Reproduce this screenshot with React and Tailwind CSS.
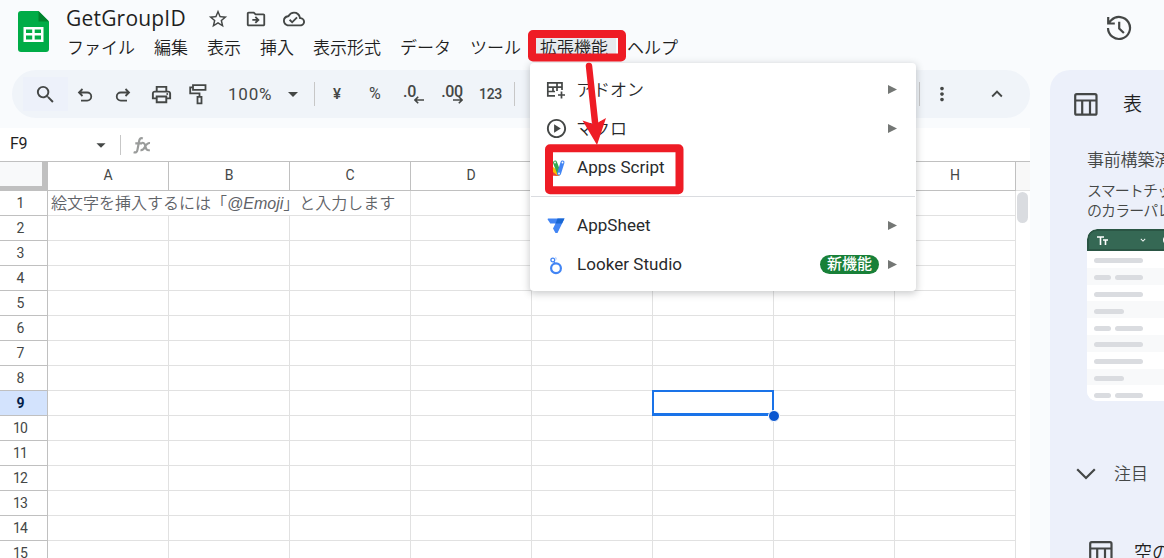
import React from 'react';
import {
  MdStarBorder,
  MdOutlineDriveFileMove,
  MdOutlineCloudDone,
  MdSearch,
  MdOutlinePrint,
  MdMoreVert,
  MdKeyboardArrowUp,
  MdKeyboardArrowDown,
  MdArrowDropDown,
  MdOutlinePlayCircle,
} from 'react-icons/md';

const MENUS = ['ファイル', '編集', '表示', '挿入', '表示形式', 'データ', 'ツール', '拡張機能', 'ヘルプ'];
const COLUMNS = ['A', 'B', 'C', 'D', 'E', 'F', 'G', 'H'];
const ROWS = Array.from({ length: 15 }, (_, i) => i + 1);
const PREVIEW_ROWS = ['full', 'split', 'full', 'short', 'split', 'full', 'full', 'short', 'split'];

const SheetsLogo = () => (
  <svg width="31" height="41" viewBox="0 0 31 41" className="shrink-0">
    <path d="M3 0H20.5L31 10.500V38a3 3 0 0 1-3 3H3a3 3 0 0 1-3-3V3a3 3 0 0 1 3-3z" fill="#00ac47" />
    <path d="M20.500 0L31 10.500H20.500z" fill="#00832d" />
    <path fillRule="evenodd" d="M5.500 16h20v15h-20zM8 18.500v3.500h6.200v-3.500zM16.700 18.500v3.500H23v-3.500zM8 24.500v4h6.200v-4zM16.700 24.500v4H23v-4z" fill="#fff" />
  </svg>
);

const UndoIcon = ({ className = '' }) => (
  <svg width="16" height="16" viewBox="0 0 16 16" fill="none" stroke="#444746" strokeWidth="1.800" className={className}>
    <path d="M5.500 2L2 5.500 5.500 9M2 5.500h8.200a4 4 0 0 1 0 8.100H4" />
  </svg>
);

const PaintIcon = () => (
  <svg width="18" height="21" viewBox="0 0 18 21" fill="none" stroke="#444746" strokeWidth="1.800">
    <path d="M4 1.200h12.500v4.600H4zM4 3.300H1.200v6h9.300v3.500" />
    <path d="M8.500 12.800h4v6.500h-4z" />
  </svg>
);

const HistoryIcon = () => (
  <svg width="26" height="26" viewBox="0 0 26 26" fill="none" stroke="#444746" strokeWidth="2.200">
    <path d="M2 13a11 11 0 1 0 3.200-7.800L2.500 8M2.200 2v6.500h6.600M13.200 6.800v6.700l4.700 4.500" />
  </svg>
);

const DecimalIcon = ({ label, increase }) => (
  <div className="relative w-[22px] h-6 text-[16px] leading-[18px] font-medium">
    <span className={`block -tracking-[0.300px] ${increase ? 'text-center' : 'pl-px'}`}>{label}</span>
    <svg width="10" height="8" viewBox="0 0 10 8" fill="none" stroke="#444746" strokeWidth="1.600" className={`absolute right-0 bottom-[3px] ${increase ? 'rotate-180' : ''}`}>
      <path d="M4.200 .8L1 4l3.200 3.200M1 4h9" />
    </svg>
  </div>
);

const TableIcon = () => (
  <svg width="24" height="23" viewBox="0 0 24 23" fill="none" stroke="#444746" strokeWidth="2.200" className="shrink-0">
    <rect x="1.200" y="1.200" width="21.300" height="20.500" rx="1.500" />
    <path d="M1 7.500h22M8.200 7.500v14M16 7.500v14" />
  </svg>
);

const AddonIcon = () => (
  <svg width="20" height="18" viewBox="0 0 20 18" fill="none" stroke="#444746" strokeWidth="1.700">
    <path d="M16 9V1.800H1.800v13H9M1.800 6.100H16M1.800 10.500H9M7 6v4.500M11 2v8M15.500 10.500v7M12 14h7" />
  </svg>
);

const AppsScriptIcon = () => (
  <svg width="20" height="18" viewBox="0 0 20 18" fill="none" strokeLinecap="round">
    <path d="M3 14.500L12 15" stroke="#ea4335" strokeWidth="4" />
    <path d="M4 8L12 14.500" stroke="#fbbc04" strokeWidth="4" />
    <path d="M9 3.500L13 14" stroke="#34a853" strokeWidth="4" />
    <path d="M16.500 3.500L13 14.500" stroke="#4285f4" strokeWidth="4" />
    <circle cx="9" cy="3.500" r=".9" fill="#fff" />
    <circle cx="16.500" cy="3.500" r=".9" fill="#fff" />
    <circle cx="13" cy="14.500" r=".9" fill="#fff" />
  </svg>
);

const AppSheetIcon = () => (
  <svg width="18" height="16" viewBox="0 0 18 16">
    <path d="M1 .5h16.500L10.500 15H8.500L6 10.500 8.500 5.500H3.300L.5 1.200z" fill="#4285f4" />
    <path d="M10.500 .5h7L15 5.500H8.500z" fill="#1967d2" />
  </svg>
);

const LookerIcon = () => (
  <svg width="14" height="20" viewBox="0 0 14 20" fill="none" stroke="#4285f4">
    <circle cx="7" cy="13.300" r="4.900" strokeWidth="2.200" />
    <circle cx="3.800" cy="5" r="1.900" strokeWidth="1.300" />
    <path d="M4.800 6.500L6 8.500" strokeWidth="1.300" />
    <path d="M6 2.500a2.500 2.500 0 0 1 1.500 2" stroke="#c6dafc" strokeWidth="1.500" />
  </svg>
);

const MenuItem = ({ icon, label, latin, badge, arrow }) => (
  <div className="flex items-center h-[39px] pl-4 pr-[19px]">
    <div className="w-5 mr-[11px] flex justify-center">{icon}</div>
    <span className={`flex-1 text-[17px] whitespace-nowrap text-[#282a2c] ${latin ? 'font-normal tracking-[0.050px]' : 'pt-0.5 -ml-px font-[350]'}`}>{label}</span>
    {badge && (
      <span className="mr-[9px] w-[59px] h-[19px] rounded-full bg-[#188038] text-white text-[15px] leading-[18px] font-medium text-center">{badge}</span>
    )}
    {arrow && (
      <svg width="9" height="9" viewBox="0 0 9 9"><path d="M0 0l9 4.500L0 9z" fill="#747775" /></svg>
    )}
  </div>
);

const ExtensionsMenu = () => (
  <div className="absolute left-[530px] top-[63px] w-[386px] h-[228px] pt-[7px] bg-white rounded shadow-[0_2px_7px_1px_rgba(60,64,67,0.25)]">
    <MenuItem icon={<AddonIcon />} label="アドオン" arrow />
    <MenuItem icon={<MdOutlinePlayCircle size={23} color="#444746" className="shrink-0" />} label="マクロ" arrow />
    <MenuItem icon={<AppsScriptIcon />} label="Apps Script" latin />
    <div className="mt-[9px] mb-[9px] mx-px h-px bg-[#dadce0]" />
    <MenuItem icon={<AppSheetIcon />} label="AppSheet" latin arrow />
    <MenuItem icon={<LookerIcon />} label="Looker Studio" latin badge="新機能" arrow />
  </div>
);

const Header = () => (
  <div className="flex h-[70px] pl-[18px] pt-[11px]">
    <SheetsLogo />
    <div className="ml-[18px] -mt-1.5">
      <div className="flex items-center h-7 text-[#444746]">
        <span className="w-[141px] -ml-px font-['Open_Sans','Noto_Sans_CJK_JP',sans-serif] text-[21px] tracking-[0.200px] text-[#1f1f1f]">GetGroupID</span>
        <MdStarBorder size={22} />
        <MdOutlineDriveFileMove size={22} className="ml-4" />
        <MdOutlineCloudDone size={22} className="ml-4" />
      </div>
      <div className="flex gap-[19px] h-[29px] mt-px items-center text-[17px] font-[350] text-[#1f1f1f] whitespace-nowrap">
        {MENUS.map((name) => (
          <span key={name} className={name === '拡張機能' ? 'bg-[#e6e9ed] -mx-2 px-2' : ''}>{name}</span>
        ))}
      </div>
    </div>
  </div>
);

const Toolbar = () => (
  <div className="flex items-center ml-3 h-12 rounded-full bg-[#f0f4f9] text-[#444746]">
    <div className="w-[45px] h-[34px] ml-[11px] bg-[#edf1fa] flex items-center justify-center">
      <MdSearch size={23} />
    </div>
    <UndoIcon className="ml-[9px] mt-0.5" />
    <UndoIcon className="ml-[22px] mt-0.5 -scale-x-100" />
    <MdOutlinePrint size={23} className="ml-[19px]" />
    <div className="ml-[16px]"><PaintIcon /></div>
    <span className="ml-[21px] mt-0.5 w-[46px] text-[17px] tracking-[0.800px]">100%</span>
    <MdArrowDropDown size={24} className="ml-[7px]" />
    <div className="ml-[9px] w-px h-6 bg-[#c7c7c7]" />
    <span className="ml-[18px] w-[12px] text-[15px] font-medium">¥</span>
    <span className="ml-[24px] w-[16px] text-[16px]">%</span>
    <div className="ml-[17px] mt-0.5"><DecimalIcon label=".0" /></div>
    <div className="ml-[17px] mt-0.5"><DecimalIcon label=".00" increase /></div>
    <span className="ml-[16px] w-[24px] text-[14px] font-medium -tracking-[0.300px]">123</span>
    <div className="ml-[11px] w-px h-6 bg-[#c7c7c7]" />
    <div className="ml-auto w-px h-6 bg-[#c7c7c7]" />
    <MdMoreVert size={22} className="ml-[11px]" />
    <MdKeyboardArrowUp size={22} className="ml-[33px] mr-[22px]" />
  </div>
);

const FormulaBar = () => (
  <div className="mt-[10px] h-[33px] flex items-center bg-white">
    <span className="pl-[10px] w-[90px] -mt-px text-[16px] -tracking-[0.300px] text-[#1f1f1f]">F9</span>
    <MdArrowDropDown size={22} color="#444746" />
    <div className="ml-2 w-px h-5 bg-[#c7c7c7]" />
    <svg width="19" height="17" viewBox="0 0 19 17" fill="none" stroke="#9a9c9b" strokeWidth="2.200" className="ml-[12px] mt-px">
      <path d="M9.800 1.500C7.500.600 6.500 2 6.100 4.200L4.500 12.600C4.100 15 3 16 .600 15.200M2.300 6.300h6.800M8.800 5.800c2.500-.2 3 .7 3.500 3.200.600 2.800 1.300 4.800 4.500 4.100M17 6c-3-.2-4.300 2.300-5.300 4.300-.9 1.900-2 3.200-4.200 2.800" />
    </svg>
  </div>
);

const Cell = ({ col, row }) => {
  const selected = col === 'F' && row === 9;
  // the placeholder in A1 runs over A1..C1, so no lines are drawn through it
  const covered = row === 1 && (col === 'A' || col === 'B');
  return (
    <div className={`relative w-[121px] shrink-0 border-b border-[#e1e1e1] ${covered ? '' : 'border-r'}`}>
      {row === 1 && col === 'A' && (
        <span className="absolute z-10 left-[3px] top-px leading-6 text-[16px] font-[350] text-[#5f6368] whitespace-nowrap">
          絵文字を挿入するには「<i className="font-['Liberation_Sans',sans-serif] font-normal">@Emoji</i>」と入力します
        </span>
      )}
      {selected && (
        <div className="absolute z-10 -left-px -top-px w-[122px] h-[26px] border-2 border-b-[3px] border-[#1a73e8]">
          <div className="absolute -right-[8px] -bottom-[9px] w-3 h-3 rounded-full border border-white bg-[#0b57d0]" />
        </div>
      )}
    </div>
  );
};

const Grid = () => (
  <div className="flex flex-1 overflow-hidden bg-white">
    <div className="w-[1016px] shrink-0">
      <div className="flex h-[30px] border-y border-[#c0c0c0] text-[14px] leading-[27px] text-[#444746]">
        <div className="w-[48px] shrink-0 bg-[#f8f9fa] border-r-[6px] border-b-4 border-[#c0c0c0]" />
        {COLUMNS.map((c) => (
          <div key={c} className="w-[121px] shrink-0 text-center border-r border-[#c0c0c0]">{c}</div>
        ))}
      </div>
      {ROWS.map((r) => (
        <div key={r} className="flex h-[25px]">
          <div className={`w-[48px] shrink-0 pr-[7px] border-r border-b border-[#c0c0c0] text-[14px] leading-[24px] -tracking-[0.800px] text-center ${r === 9 ? 'bg-[#d3e3fd] text-[#041e49] font-bold' : 'text-[#444746]'}`}>{r}</div>
          {COLUMNS.map((c) => <Cell key={c} col={c} row={r} />)}
        </div>
      ))}
    </div>
    <div className="flex-1 border-t border-[#c0c0c0]">
      <div className="h-[29px] bg-[#f8f8f8] border-b border-[#e1e1e1]" />
      <div className="mt-px ml-px w-[11px] h-[31px] rounded-full bg-[#dadce0]" />
    </div>
  </div>
);

const Bar = ({ className }) => <div className={`h-[5px] rounded-full bg-[#dadce0] ${className}`} />;

const TablePreview = () => (
  <div className="w-[230px] h-[172px] rounded-[10px] bg-white overflow-hidden">
    <div className="h-[22px] flex items-center pl-[10px] bg-[#356854] border-2 border-r-0 border-[#2a5544] rounded-tl-[10px] text-white">
      <svg width="11" height="9" viewBox="0 0 11 9" fill="none" stroke="#fff" strokeWidth="1.600" className="-ml-0.5">
        <path d="M0 1h7M3.500 1v8M6 4h5M8.500 4v5" />
      </svg>
      <MdKeyboardArrowDown size={10} className="ml-[30px]" />
      <div className="ml-[15px] w-2 h-2 rounded-full border-2 border-white" />
    </div>
    {PREVIEW_ROWS.map((kind, i) => (
      <div key={i} className={`h-[16.800px] pl-[7px] pt-[3px] flex items-center gap-1 ${i % 2 ? 'bg-[#f8f9fa]' : 'bg-white'}`}>
        {kind === 'full' && <Bar className="w-[49px]" />}
        {kind === 'short' && <Bar className="w-[30px]" />}
        {kind === 'split' && (
          <>
            <Bar className="w-[17px]" />
            <Bar className="w-[28px]" />
          </>
        )}
      </div>
    ))}
  </div>
);

const SidePanel = () => (
  <div className="flex-1 ml-5 pl-6 pt-[20px] rounded-tl-[20px] bg-[#ecf0fa] overflow-hidden font-[350] text-[#444746] whitespace-nowrap">
    <div className="flex items-center h-7">
      <TableIcon />
      <span className="ml-[25px] mt-0.5 text-[19px] text-[#1f1f1f]">表</span>
    </div>
    <div className="pl-[13px]">
      <h2 className="mt-[29px] h-[26px] leading-[26px] text-[17px] -tracking-[0.200px]">事前構築済みの表</h2>
      <p className="mt-2 mb-2 text-[15px] leading-5 -tracking-[0.900px]">
        スマートチップ<br />のカラーパレット
      </p>
      <TablePreview />
    </div>
    <div className="mt-[59px] flex items-center h-7">
      <svg width="20" height="12" viewBox="0 0 20 12" fill="none" stroke="#444746" strokeWidth="2.200" className="ml-0.5">
        <path d="M1.200 1.200L10 10l8.800-8.800" />
      </svg>
      <span className="ml-[18px] mt-px text-[17px]">注目</span>
    </div>
    <div className="mt-[50px] ml-[15px] flex items-center h-7">
      <TableIcon />
      <span className="ml-[21px] mt-px text-[18px] text-[#1f1f1f]">空の表</span>
    </div>
  </div>
);

// Red boxes and arrow that point from the menu to Apps Script
const Annotations = () => (
  <svg width="1164" height="558" viewBox="0 0 1164 558" className="absolute left-0 top-0 pointer-events-none" fill="none" stroke="#ee1c25">
    <rect x="532" y="34" width="90" height="23.500" rx="1" strokeWidth="8" strokeLinejoin="round" />
    <rect x="549" y="148.300" width="130.500" height="42" rx="1" strokeWidth="8" strokeLinejoin="round" />
    <path d="M589 66l6 56" strokeWidth="6.500" strokeLinecap="round" />
    <path d="M582.500 120.500l12 4 11.500-6.500-9 27z" fill="#ee1c25" stroke="none" />
  </svg>
);

const App = () => (
  <div className="relative w-[1164px] h-[558px] overflow-hidden flex bg-[#f9fbfd] font-[Roboto,'Noto_Sans_CJK_JP',sans-serif]">
    <div className="w-[1030px] shrink-0 flex flex-col">
      <Header />
      <Toolbar />
      <FormulaBar />
      <Grid />
    </div>
    <div className="flex-1 flex flex-col">
      <div className="h-[70px] shrink-0 pl-[76px] pt-[15px]">
        <HistoryIcon />
      </div>
      <SidePanel />
    </div>
    <ExtensionsMenu />
    <Annotations />
  </div>
);

export default App;
